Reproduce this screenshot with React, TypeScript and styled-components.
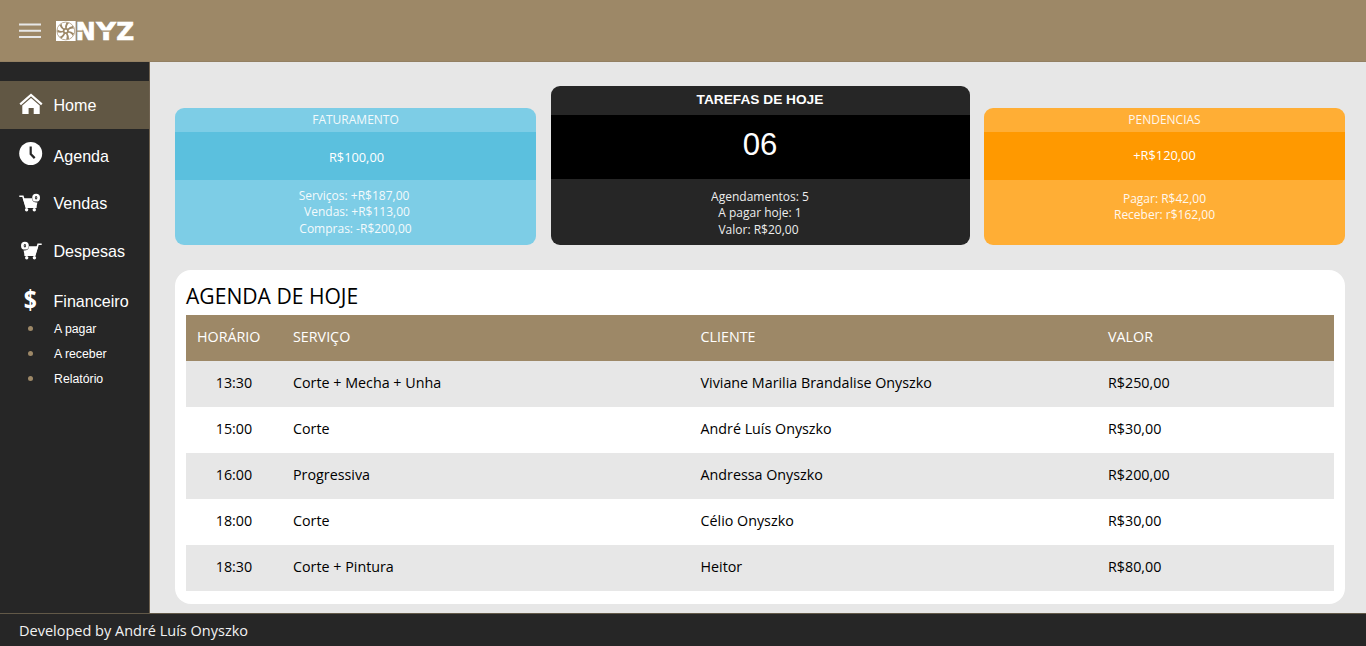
import React from "react";
import styled, { createGlobalStyle } from "styled-components";

const GlobalStyle = createGlobalStyle`
  * { box-sizing: border-box; }
  body { margin: 0; background: #e7e7e7; font-family: "Open Sans", sans-serif; }
`;

const Page = styled.div`
  display: grid;
  grid-template: 62px 551px 33px / 150px 1fr;
  height: 646px;
  overflow: hidden;
`;

const Header = styled.header`
  grid-column: 1 / 3;
  display: flex;
  padding: 15px 0 0 19px;
  gap: 15px;
  background: #9d8867;
  border-bottom: 1px solid #938063;
`;

const Sidebar = styled.nav`
  padding-top: 19px;
  background: #262626;
  border-right: 1px solid #6f6250;
  color: #fff;
  font-family: "Liberation Sans", sans-serif;
`;

const NavItem = styled.a<{ $height: number; $active?: boolean; $top?: number }>`
  display: flex;
  align-items: center;
  height: ${(p) => p.$height}px;
  margin-top: ${(p) => p.$top ?? 0}px;
  padding-left: 19px;
  gap: 10.5px;
  font-size: 16.1px;
  background: ${(p) => (p.$active ? "#615744" : "transparent")};
`;

const IconSlot = styled.span<{ $lift?: number }>`
  display: flex;
  justify-content: center;
  width: 24px;
  margin-bottom: ${(p) => p.$lift ?? 0}px;
`;

const SubList = styled.ul`
  margin: 0;
  padding: 0 0 0 28px;
  list-style: none;
`;

const SubItem = styled.li`
  display: flex;
  align-items: center;
  gap: 21px;
  height: 25px;
  font-size: 12.3px;
  &::before {
    content: "";
    width: 5px;
    height: 5px;
    border-radius: 50%;
    background: #9d8867;
  }
`;

const Main = styled.main`
  padding: 24px 21px 0 25px;
`;

const Cards = styled.div`
  display: grid;
  grid-template-columns: 361px 419px 361px;
  column-gap: 14.5px;
  align-items: end;
  height: 159px;
`;

const Card = styled.section<{ $bg: string; $rows: string }>`
  display: grid;
  grid-template-rows: ${(p) => p.$rows};
  border-radius: 9px;
  overflow: hidden;
  background: ${(p) => p.$bg};
  color: #fff;
  text-align: center;
`;

const CardTitle = styled.h2<{ $strong?: boolean }>`
  margin: 0;
  font: ${(p) =>
    p.$strong
      ? 'bold 13.7px/27px "Liberation Sans", sans-serif'
      : '400 12px/24px "Open Sans", sans-serif'};
  opacity: ${(p) => (p.$strong ? 1 : 0.9)};
`;

const Amount = styled.div<{ $bg: string; $line: number; $big?: boolean; $nudge?: number }>`
  padding-left: ${(p) => p.$nudge ?? 0}px;
  background: ${(p) => p.$bg};
  font-family: ${(p) => (p.$big ? '"Liberation Sans"' : '"Open Sans"')}, sans-serif;
  font-size: ${(p) => (p.$big ? 31.2 : 12.8)}px;
  line-height: ${(p) => p.$line}px;
`;

const Details = styled.div<{ $top: number }>`
  padding-top: ${(p) => p.$top}px;
  font-size: 12px;
  line-height: 16.4px;
  opacity: 0.92;
`;

const Detail = styled.div<{ $shift?: number }>`
  padding-left: ${(p) => Math.max(p.$shift ?? 0, 0)}px;
  padding-right: ${(p) => Math.max(-(p.$shift ?? 0), 0)}px;
`;

const Panel = styled.section`
  height: 334px;
  margin-top: 24.5px;
  padding: 0 11px;
  border-radius: 16px;
  background: #fff;
`;

const PanelTitle = styled.h1`
  margin: 0;
  height: 45.5px;
  font-size: 21.1px;
  font-weight: 400;
  line-height: 51px;
`;

const Row = styled.div<{ $kind: "head" | "odd" | "even" }>`
  display: grid;
  grid-template-columns: 96px 407.5px 407.5px 1fr;
  align-items: center;
  height: 46px;
  padding: 0 0 3px 11px;
  font-size: 14.3px;
  background: ${(p) =>
    p.$kind === "head" ? "#9d8867" : p.$kind === "odd" ? "#e7e7e7" : "#fff"};
  color: ${(p) => (p.$kind === "head" ? "#fff" : "#000")};
`;

const Time = styled.span`
  width: 74px;
  text-align: center;
`;

const Footer = styled.footer`
  grid-column: 1 / 3;
  padding-left: 19px;
  border-top: 1px solid #625948;
  background: #262626;
  color: #f2f2f2;
  font-size: 14.5px;
  line-height: 33px;
`;

const MenuIcon = () => (
  <svg width="22" height="32" viewBox="0 -5 22 32" stroke="#e7e7e7" strokeWidth="1.9">
    <path d="M0 4.5h22M0 10.7h22M0 17h22" />
  </svg>
);

const Logo = () => (
  <svg width="86" height="38" viewBox="0 -5 86 38" fill="#fff">
    <rect x="0" y="1" width="19.6" height="20" />
    <circle cx="9.8" cy="11" r="8.9" fill="none" stroke="#9d8867" strokeWidth=".7" />
    <circle cx="9.8" cy="11" r="3" fill="#9d8867" />
    {[0, 51.4, 102.9, 154.3, 205.7, 257.1, 308.6].map((a) => (
      <path
        key={a}
        d="M9.2 8.6Q8.8 5.4 10.4 2.4L13 3.2Q10.4 5.2 10.9 8.9Z"
        fill="#9d8867"
        transform={`rotate(${a} 9.8 11)`}
      />
    ))}
    <circle cx="9.8" cy="11" r="1.3" />
    <g fontFamily="DejaVu Sans" fontWeight="700" fontSize="25" stroke="#fff" strokeWidth=".6">
      <text transform="translate(19.5 20.3) scale(.97 1)">N</text>
      <text transform="translate(40.2 20.3) scale(1.09 1)">Y</text>
      <text transform="translate(60.3 20.3) scale(.99 1)">Z</text>
    </g>
    <path d="M21 11.2h6.5M45 11.2h12M61 9.6h6" stroke="#9d8867" strokeWidth="1.2" />
  </svg>
);

const HomeIcon = () => (
  <svg width="24" height="22" viewBox="0 0 24 22" fill="#fff">
    <path d="M1.2 11.3 12 1.9l10.8 9.4" fill="none" stroke="#fff" strokeWidth="2.2" />
    <path d="M3.3 12.4 12 5.1l8.7 7.3V21h-6v-6H9.6v6H3.3Z" />
  </svg>
);

const ClockIcon = () => (
  <svg width="24" height="24" viewBox="0 0 24 24">
    <circle cx="11.7" cy="11.5" r="11.5" fill="#fff" />
    <path d="M11.7 4.5v7.6l4 4" fill="none" stroke="#262626" strokeWidth="2.2" />
  </svg>
);

const CartIcon = ({ flip = false }: { flip?: boolean }) => (
  <svg width="24" height="20" viewBox="0 0 24 20">
    <g transform={flip ? "translate(23 0) scale(-1 1)" : undefined} fill="#fff">
      <path d="M.3 3.2h3.6L7.2 14.2h10.3" fill="none" stroke="#fff" strokeWidth="1.6" />
      <path d="M3.8 5.2H13q.4 4.6 5.4 4.3l-1 4.9H6.8Z" />
      <circle cx="7.6" cy="16.8" r="1.7" />
      <circle cx="15.3" cy="16.8" r="1.7" />
      <circle cx="17.1" cy="4.7" r="3.9" />
      <ellipse cx="17.1" cy="4.7" rx="1.2" ry="1.8" fill="#262626" />
      <path d="M17.1 4v1.4" stroke="#fff" strokeWidth=".6" />
    </g>
  </svg>
);

const DollarIcon = () => (
  <svg width="24" height="36" viewBox="0 -4 24 36">
    <text transform="translate(11.3 23) scale(.88 1)" textAnchor="middle" fontFamily="Open Sans" fontSize="26" fontWeight="700" fill="#fff">
      $
    </text>
  </svg>
);

const appointments = [
  ["13:30", "Corte + Mecha + Unha", "Viviane Marilia Brandalise Onyszko", "R$250,00"],
  ["15:00", "Corte", "André Luís Onyszko", "R$30,00"],
  ["16:00", "Progressiva", "Andressa Onyszko", "R$200,00"],
  ["18:00", "Corte", "Célio Onyszko", "R$30,00"],
  ["18:30", "Corte + Pintura", "Heitor", "R$80,00"],
];

export default function App() {
  return (
    <Page>
      <GlobalStyle />
      <Header>
        <MenuIcon />
        <Logo />
      </Header>
      <Sidebar>
        <NavItem $height={48} $active>
          <IconSlot $lift={2}><HomeIcon /></IconSlot>Home
        </NavItem>
        <NavItem $height={54}>
          <IconSlot $lift={5}><ClockIcon /></IconSlot>Agenda
        </NavItem>
        <NavItem $height={40}>
          <IconSlot><CartIcon /></IconSlot>Vendas
        </NavItem>
        <NavItem $height={56}>
          <IconSlot><CartIcon flip /></IconSlot>Despesas
        </NavItem>
        <NavItem $height={30} $top={7}>
          <IconSlot $lift={3}><DollarIcon /></IconSlot>Financeiro
        </NavItem>
        <SubList>
          <SubItem>A pagar</SubItem>
          <SubItem>A receber</SubItem>
          <SubItem>Relatório</SubItem>
        </SubList>
      </Sidebar>
      <Main>
        <Cards>
          <Card $bg="#7dcde6" $rows="24px 48px 65px">
            <CardTitle>FATURAMENTO</CardTitle>
            <Amount $bg="#5bc0de" $line={51} $nudge={2}>R$100,00</Amount>
            <Details $top={8}>
              <Detail $shift={-3}>Serviços: +R$187,00</Detail>
              <Detail $shift={3}>Vendas: +R$113,00</Detail>
              <Detail>Compras: -R$200,00</Detail>
            </Details>
          </Card>
          <Card $bg="#262626" $rows="29px 64px 66px">
            <CardTitle $strong>TAREFAS DE HOJE</CardTitle>
            <Amount $bg="#000" $line={59} $big>06</Amount>
            <Details $top={10}>
              <Detail>Agendamentos: 5</Detail>
              <Detail>A pagar hoje: 1</Detail>
              <Detail $shift={-3}>Valor: R$20,00</Detail>
            </Details>
          </Card>
          <Card $bg="#ffae35" $rows="24px 48px 65px">
            <CardTitle>PENDENCIAS</CardTitle>
            <Amount $bg="#ff9900" $line={47}>+R$120,00</Amount>
            <Details $top={11}>
              <Detail>Pagar: R$42,00</Detail>
              <Detail>Receber: r$162,00</Detail>
            </Details>
          </Card>
        </Cards>
        <Panel>
          <PanelTitle>AGENDA DE HOJE</PanelTitle>
          <Row $kind="head">
            <span>HORÁRIO</span>
            <span>SERVIÇO</span>
            <span>CLIENTE</span>
            <span>VALOR</span>
          </Row>
          {appointments.map(([time, service, client, value], i) => (
            <Row key={time} $kind={i % 2 ? "even" : "odd"}>
              <Time>{time}</Time>
              <span>{service}</span>
              <span>{client}</span>
              <span>{value}</span>
            </Row>
          ))}
        </Panel>
      </Main>
      <Footer>Developed by André Luís Onyszko</Footer>
    </Page>
  );
}
